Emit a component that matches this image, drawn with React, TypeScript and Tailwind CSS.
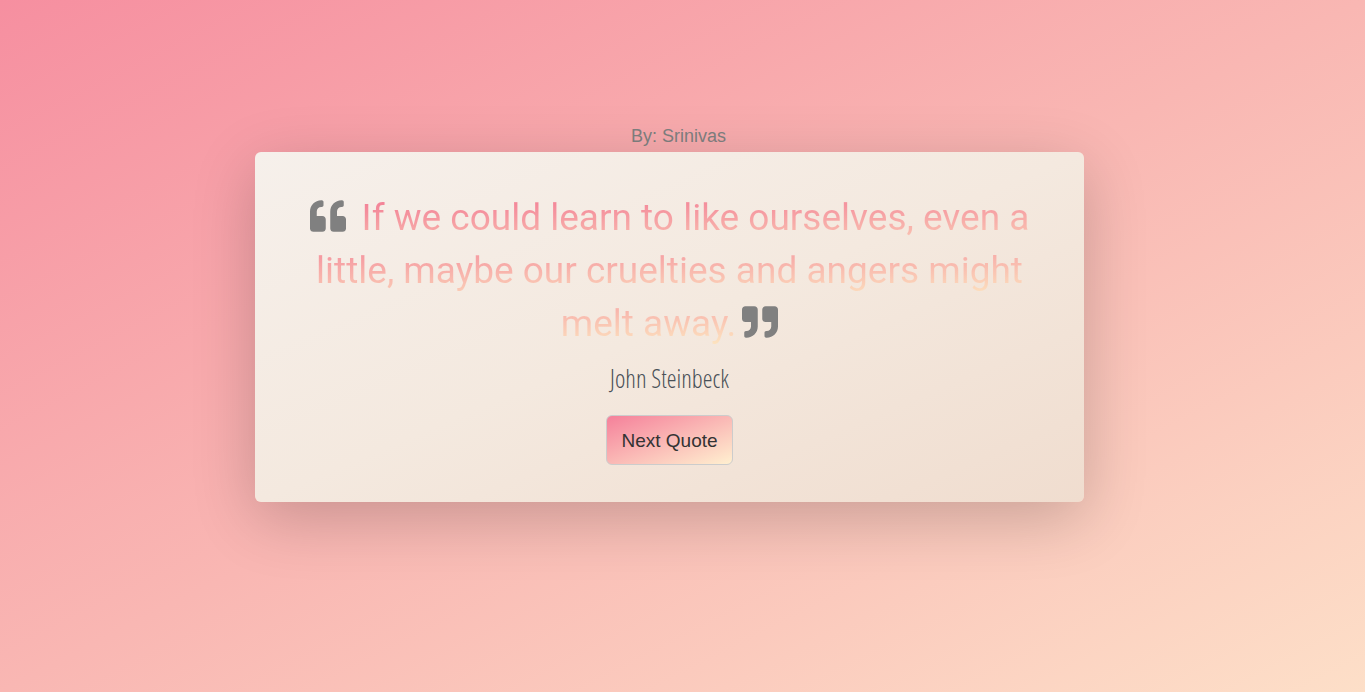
import { FaQuoteLeft, FaQuoteRight } from "react-icons/fa";

const author = "John Steinbeck";
const quote =
  "If we could learn to like ourselves, even a little, maybe our cruelties and angers might melt away.";

export default function App() {
  return (
    <main className="flex min-h-screen flex-col items-center bg-[linear-gradient(to_right_bottom,#f68fa0,#f9b7b3,#fddfc8)] px-4 pt-[120px] font-['Liberation_Sans',sans-serif]">
      <div className="mr-[26px] flex w-full max-w-[829px] flex-col items-center">
        <p className="ml-[18px] text-lg leading-8 text-[#808080]">By: Srinivas</p>
        <section className="flex w-full flex-col items-center rounded-md bg-[linear-gradient(to_right_bottom,#f6f0eb,#f4e9df,#f0ddcf)] px-10 pt-[39px] pb-[37px] text-center shadow-[0_16px_64px_rgba(0,0,0,0.2)]">
          <blockquote className="font-['Roboto',sans-serif] text-[37px] leading-[53px]">
            <FaQuoteLeft className="mr-4 inline size-9 align-[-4px] text-[#808080]" aria-hidden="true" />
            <span className="bg-[linear-gradient(to_right_bottom,#f27a94,#fde5c0)] bg-clip-text text-transparent">{quote}</span>
            <FaQuoteRight className="ml-1.5 inline size-9 align-[-4px] text-[#808080]" aria-hidden="true" />
          </blockquote>
          <p className="mt-3 font-['Open_Sans_Condensed_Light','Open_Sans_Light_Condensed','Open_Sans_Condensed','Open_Sans',sans-serif] text-[25px] leading-8 font-light text-[#495057]">{author}</p>
          <button className="mt-[21px] rounded-md border border-[#ccc] bg-[linear-gradient(to_right_bottom,#f5809a,#fff0d0)] px-3.5 pt-[11px] pb-[9px] text-[19px] leading-7 text-[#333]">Next Quote</button>
        </section>
      </div>
    </main>
  );
}
